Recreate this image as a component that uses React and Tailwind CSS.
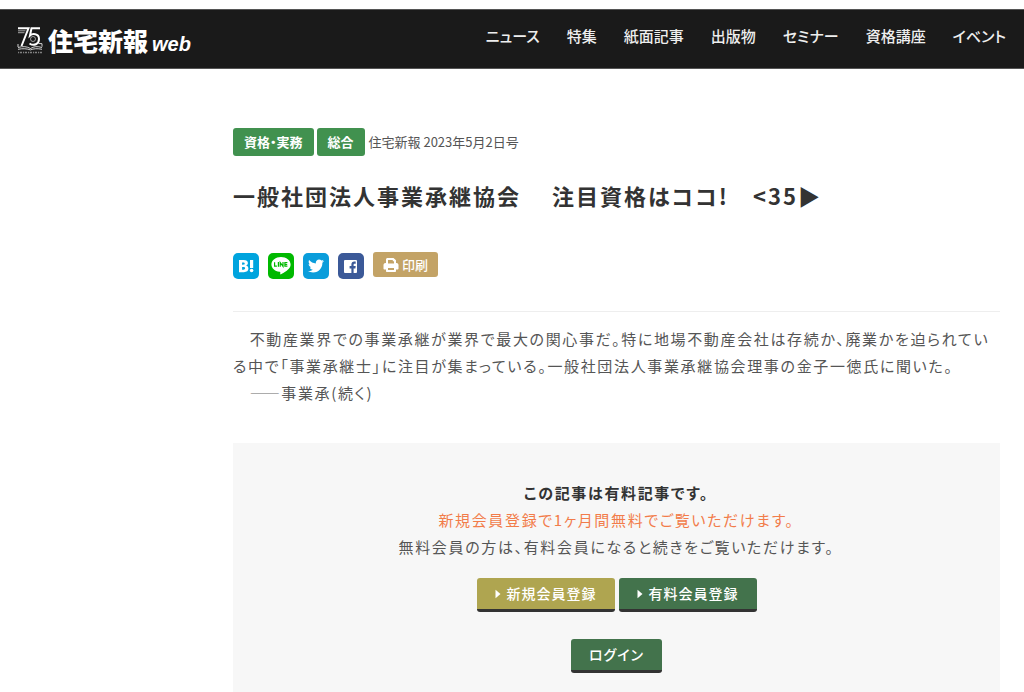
import React from 'react';
import { FaTwitter } from 'react-icons/fa';

const navItems = ['ニュース', '特集', '紙面記事', '出版物', 'セミナー', '資格講座', 'イベント'];

const tags = ['資格・実務', '総合'];

const HatenaIcon = () => (
  <svg viewBox="0 0 26 26" className="size-full" fill="#fff">
    <path
      fillRule="evenodd"
      d="M6 7h4.600c2.800 0 4.300 1 4.300 3 0 1.400-.9 2.300-2.200 2.600 1.800.3 2.700 1.400 2.700 3 0 2.300-1.600 3.600-4.500 3.600H6V7zm3.100 2.400v2.300h1c1.100 0 1.600-.4 1.600-1.200s-.5-1.100-1.600-1.100h-1zm0 4.600v2.700h1.200c1.200 0 1.800-.5 1.800-1.400s-.6-1.300-1.800-1.300H9.100z"
    />
    <path d="M17 7h3.200v8H17z" />
    <circle cx="18.600" cy="17.500" r="1.800" />
  </svg>
);

const LineIcon = () => (
  <svg viewBox="0 0 26 26" className="size-full" fill="#fff">
    <path d="M13 4c5.300 0 9.600 3.300 9.600 7.400 0 1.700-.7 3.200-2 4.600-1.900 2.200-6.600 4.900-7.600 5.300-1 .4-.8-.3-.8-.5l.1-.9c0-.3.1-.7-.1-.9-.1-.2-.5-.3-.8-.3-4.600-.6-8-3.700-8-7.300C3.400 7.300 7.700 4 13 4z" />
    <path
      d="M6.600 9.200v4h2.300M10.400 9v4.700M12.200 13.700V9.500l2.800 3.800V9M19.400 9.500h-2.500v3.700h2.500M16.900 11.400h2.300"
      fill="none"
      stroke="#00b900"
      strokeWidth="1.200"
    />
  </svg>
);

const FacebookIcon = () => (
  <svg viewBox="0 0 26 26" className="size-full">
    <rect x="6" y="7" width="13" height="13" rx="1" fill="#fff" />
    <path
      d="M13.400 20v-4.600h-1.800V13h1.800v-1.500c0-1.900 1.100-2.900 2.800-2.900h1.500v2.100h-1c-.9 0-1.100.4-1.100 1.100V13h2.100l-.3 2.400h-1.800V20h-2.200z"
      fill="#3b5998"
    />
  </svg>
);

const PrintIcon = () => (
  <svg viewBox="0 0 16 16" className="size-4">
    <path
      fillRule="evenodd"
      fill="#fff"
      d="M4.500 1h6L13 3.300V6h.5C14.600 6 15.500 6.900 15.500 8v3.500c0 .6-.4 1-1 1H13V14c0 .6-.4 1-1 1H4c-.6 0-1-.4-1-1v-1.500H1.500c-.6 0-1-.4-1-1V8c0-1.100.9-2 2-2H3V2.500C3 1.700 3.700 1 4.500 1zM5 3v3.500h6V4.200H9.800V3H5zm0 8v2h6v-2H5z"
    />
  </svg>
);

const shareLinks = [
  { name: 'はてなブックマーク', color: 'bg-[#00a4de]', icon: <HatenaIcon /> },
  { name: 'LINE', color: 'bg-[#00b900]', icon: <LineIcon /> },
  { name: 'Twitter', color: 'bg-[#0a9ddb]', icon: <FaTwitter className="size-4 text-white" /> },
  { name: 'Facebook', color: 'bg-[#3b5998]', icon: <FacebookIcon /> },
];

const AnniversaryMark = () => (
  <svg viewBox="0 0 26 28" className="h-7 w-[26px]" fill="none" stroke="#fff">
    <path d="M1 2.300h10.500L4.500 20" strokeWidth="2" />
    <path d="M23 2.300h-8.500L13 9.500c2-2 9-2.500 9 3.500 0 5-5 7.500-9.500 4.500" strokeWidth="2" />
    <circle cx="16" cy="13" r="2.500" strokeWidth=".7" opacity=".8" />
    <path d="M1 4.800h7.500M1 6.700h6.500" strokeWidth="1" opacity=".6" />
    <path d="M21.500 17.500l3.500.2v3M1 18v3M1 21.500c5-1.500 9-1 12.500 1 3-2 7-2.500 11.500-1M1 23.300c5-1 9-.6 12.500.6 3-1.300 7-1.600 11.500-.6" strokeWidth=".8" />
    <path d="M1 26.500h24" strokeWidth="1.400" strokeDasharray="1.200 .8 2 1" opacity=".45" />
  </svg>
);

const Header = () => (
  <header className="mt-[9px] flex h-[60px] items-start justify-between border-y border-[#555] bg-[#1a1a1a] pl-[17px] pr-[18px] text-white">
    <a href="#" className="flex items-center pt-4">
      <AnniversaryMark />
      <span className="ml-[5px] text-[25px] leading-7 font-black">住宅新報</span>
      <span className="ml-1 pt-2 font-['Liberation_Sans',sans-serif] text-[20px] leading-5 font-bold italic">web</span>
    </a>
    <nav className="flex gap-[27px] pt-4">
      {navItems.map((item) => (
        <a key={item} href="#" className="text-[15px] leading-5 font-medium text-[#eee]">
          {item}
        </a>
      ))}
    </nav>
  </header>
);

const ActionButton = ({ children, color, arrow }) => (
  <button
    type="button"
    className={`inline-flex h-[34px] items-center gap-[6px] rounded-[3px] border-b-[3px] border-[#333] px-[18px] text-[14px] font-medium tracking-[1px] text-white ${color}`}
  >
    {arrow && (
      <svg viewBox="0 0 6 10" className="h-[10px] w-[6px]" fill="#fff">
        <path d="M.5.8L5.500 5 .5 9.200z" />
      </svg>
    )}
    {children}
  </button>
);

const Paywall = () => (
  <section className="mt-[37px] bg-[#f7f7f7] pt-9 pb-[19px] text-center">
    <p className="font-bold text-[#333]">この記事は有料記事です。</p>
    <p className="text-[#f27c4a]">新規会員登録で1ヶ月間無料でご覧いただけます。</p>
    <p>無料会員の方は、有料会員になると続きをご覧いただけます。</p>
    <div className="mt-[18px] flex justify-center gap-1">
      <ActionButton color="bg-[#afa550]" arrow>新規会員登録</ActionButton>
      <ActionButton color="bg-[#43734c]" arrow>有料会員登録</ActionButton>
    </div>
    <div className="mt-[27px] flex justify-center">
      <ActionButton color="bg-[#43734c]">ログイン</ActionButton>
    </div>
  </section>
);

const App = () => {
  return (
    <div
      lang="ja"
      className="overflow-hidden bg-white font-['Noto_Sans_CJK_JP',sans-serif] text-[#555] [font-feature-settings:'palt']"
    >
      <Header />
      <main className="mr-6 ml-[233px] pt-[59px]">
        <div className="flex items-center gap-[3px] text-[13px]">
          {tags.map((tag) => (
            <a key={tag} href="#" className="rounded-[3px] bg-[#41914f] px-[11px] py-1 leading-5 font-bold text-white">
              {tag}
            </a>
          ))}
          <span className="pl-px">住宅新報 2023年5月2日号</span>
        </div>

        <h1 className="mt-[23px] text-[22px] leading-8 font-bold tracking-[2px] whitespace-pre text-[#333]">
          {'一般社団法人事業承継協会\u3000 注目資格はココ!\u3000<35▶'}
        </h1>

        <div className="mt-[41px] flex items-start gap-[9px]">
          {shareLinks.map(({ name, color, icon }) => (
            <a key={name} href="#" aria-label={name} className={`mt-px flex size-[26px] items-center justify-center rounded-[5px] ${color}`}>
              {icon}
            </a>
          ))}
          <button type="button" className="flex h-[25px] items-center gap-[3px] rounded-[3px] bg-[#c3a366] px-[10px] text-[13px] font-medium text-white">
            <PrintIcon />
            印刷
          </button>
        </div>

        <div className="mt-8 border-t border-[#eee] pt-[13px] text-[15px] leading-[27px] tracking-[0.11em]">
          <p>
            {'\u3000'}不動産業界での事業承継が業界で最大の関心事だ。特に地場不動産会社は存続か、廃業かを迫られている中で「事業承継士」に注目が集まっている。一般社団法人事業承継協会理事の金子一徳氏に聞いた。
          </p>
          <p>{'\u3000'}<span className="text-[#999]">――</span>事業承(続く)</p>
          <Paywall />
        </div>
      </main>
    </div>
  );
};

export default App;
